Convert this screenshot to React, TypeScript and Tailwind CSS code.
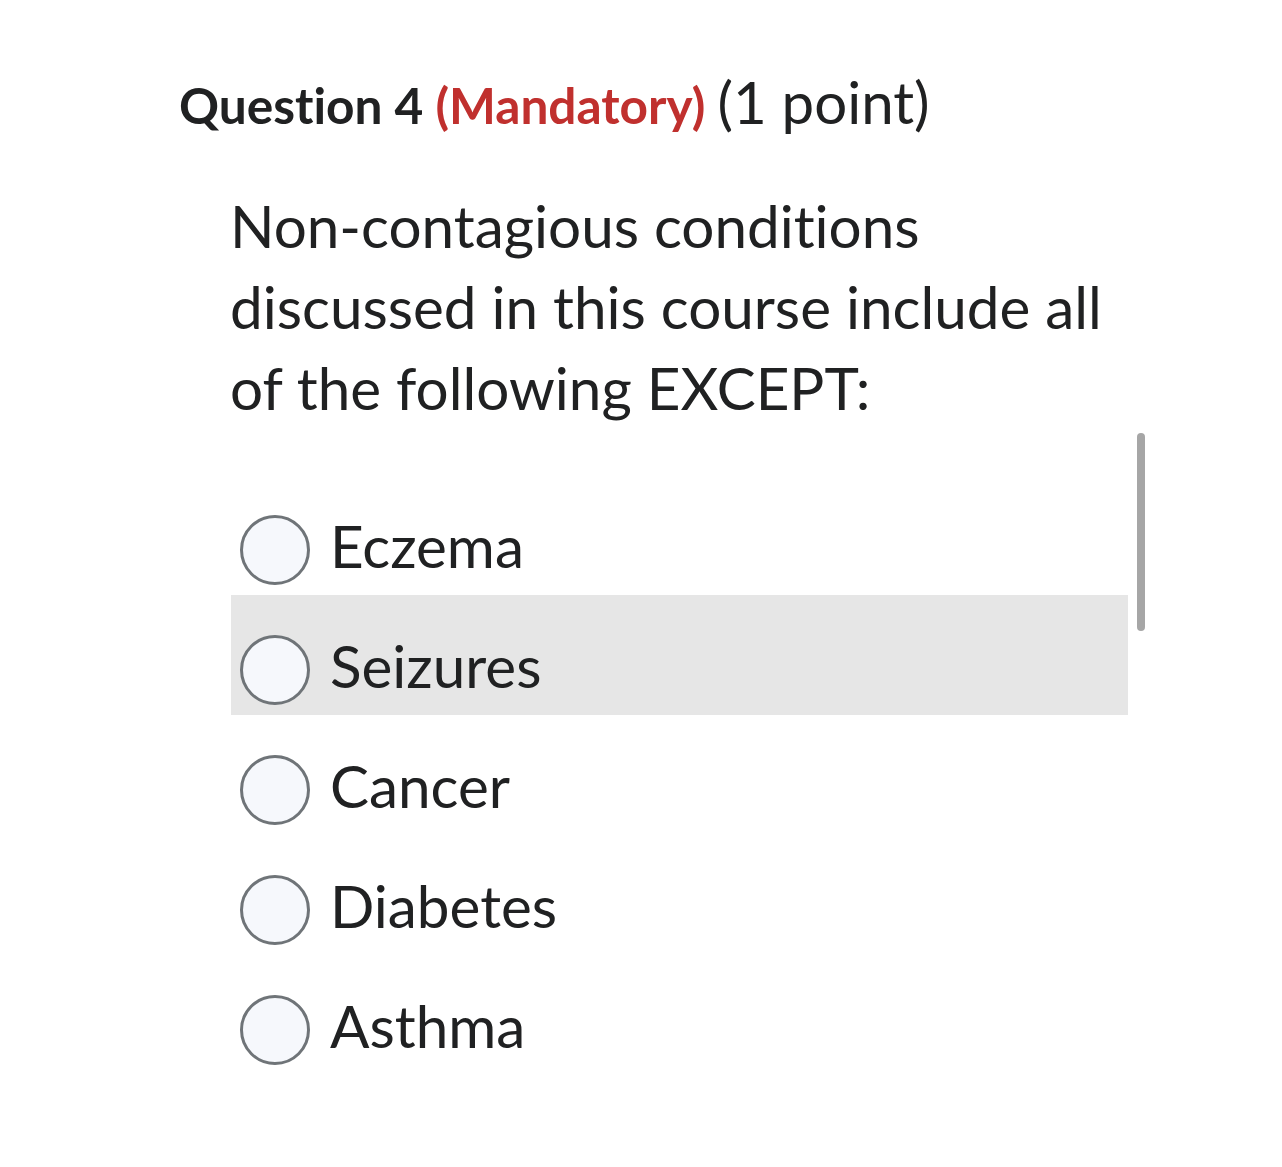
const OPTIONS = ['Eczema', 'Seizures', 'Cancer', 'Diabetes', 'Asthma']

export default function App() {
  const hovered = 'Seizures'

  return (
    <div className="min-h-[1167px] w-[1282px] bg-white text-[#202122] font-['Lato','Noto_Sans',sans-serif] [font-variant-ligatures:none] relative">
      <div className="pl-[179px] pt-[70px]">
        <h2 className="text-[49.6px] leading-[64px] font-bold">
          Question 4 <span className="text-[#c0302e]">(Mandatory)</span>{' '}
          <span className="font-normal text-[58.2px]">(1 point)</span>
        </h2>
      </div>

      <div className="pl-[230px] pr-[150px] mt-[48px]">
        <p className="text-[58.4px] leading-[81px]">
          Non-contagious conditions discussed in this course include all of the following EXCEPT:
        </p>

        <div className="mt-[47px] w-[897px] ml-[1px]">
          {OPTIONS.map(o => (
            <label
              key={o}
              className={`flex items-center gap-[20px] pt-[40px] pb-[10px] pl-[9px] ${o === hovered ? 'bg-[#e6e6e6]' : ''}`}
            >
              <span className="w-[70px] h-[70px] rounded-full border-[3px] border-[#6f7478] bg-[#f6f8fc] shrink-0" />
              <span className="text-[58.4px] leading-[60px] mb-[10px]">{o}</span>
            </label>
          ))}
        </div>
      </div>

      <div className="absolute left-[1137px] top-[433px] w-[8px] h-[198px] rounded-full bg-[#a6a6a6]" />
    </div>
  )
}
